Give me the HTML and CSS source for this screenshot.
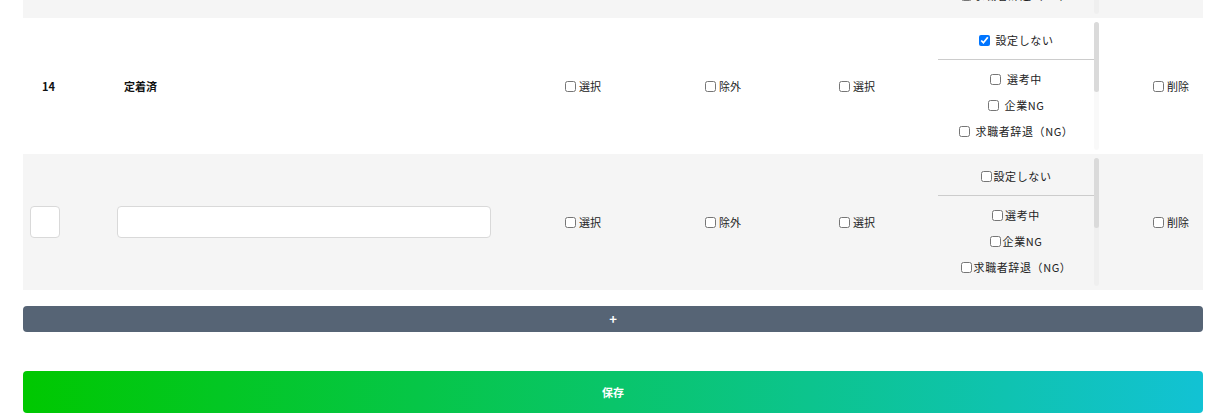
FILE: index.html
```html
<!DOCTYPE html>
<html lang="ja">
<head>
<meta charset="utf-8">
<title>ステータス設定</title>
<link rel="stylesheet" href="styles.css">
</head>
<body>
<div class="page">
  <div class="rows">
    <div class="row grey">
      <div class="cell num"><input class="num-input" type="text"></div>
      <div class="cell name"><input class="name-input" type="text"></div>
      <div class="cell center"><label class="chk"><input type="checkbox">選択</label></div>
      <div class="cell center"><label class="chk"><input type="checkbox">除外</label></div>
      <div class="cell center"><label class="chk"><input type="checkbox">選択</label></div>
      <div class="cell status">
        <div class="status-box tight">
          <div class="status-scroll">
            <div class="status-head"><label class="opt"><input type="checkbox">設定しない</label></div>
            <div class="status-list">
              <label class="opt"><input type="checkbox">選考中</label>
              <label class="opt"><input type="checkbox">企業NG</label>
              <label class="opt"><input type="checkbox">求職者辞退（NG）</label>
            </div>
          </div>
          <div class="scrollbar"><div class="thumb"></div></div>
        </div>
      </div>
      <div class="cell center"><label class="chk"><input type="checkbox">削除</label></div>
    </div>

    <div class="row white">
      <div class="cell num"><span class="num-text">14</span></div>
      <div class="cell name"><span class="name-text">定着済</span></div>
      <div class="cell center"><label class="chk"><input type="checkbox">選択</label></div>
      <div class="cell center"><label class="chk"><input type="checkbox">除外</label></div>
      <div class="cell center"><label class="chk"><input type="checkbox">選択</label></div>
      <div class="cell status">
        <div class="status-box spaced">
          <div class="status-scroll">
            <div class="status-head"><label class="opt"><input type="checkbox" checked>設定しない</label></div>
            <div class="status-list">
              <label class="opt"><input type="checkbox">選考中</label>
              <label class="opt"><input type="checkbox">企業NG</label>
              <label class="opt"><input type="checkbox">求職者辞退（NG）</label>
            </div>
          </div>
          <div class="scrollbar"><div class="thumb"></div></div>
        </div>
      </div>
      <div class="cell center"><label class="chk"><input type="checkbox">削除</label></div>
    </div>

    <div class="row grey">
      <div class="cell num"><input class="num-input" type="text"></div>
      <div class="cell name"><input class="name-input" type="text"></div>
      <div class="cell center"><label class="chk"><input type="checkbox">選択</label></div>
      <div class="cell center"><label class="chk"><input type="checkbox">除外</label></div>
      <div class="cell center"><label class="chk"><input type="checkbox">選択</label></div>
      <div class="cell status">
        <div class="status-box tight">
          <div class="status-scroll">
            <div class="status-head"><label class="opt"><input type="checkbox">設定しない</label></div>
            <div class="status-list">
              <label class="opt"><input type="checkbox">選考中</label>
              <label class="opt"><input type="checkbox">企業NG</label>
              <label class="opt"><input type="checkbox">求職者辞退（NG）</label>
            </div>
          </div>
          <div class="scrollbar"><div class="thumb"></div></div>
        </div>
      </div>
      <div class="cell center"><label class="chk"><input type="checkbox">削除</label></div>
    </div>
  </div>

  <button class="add-btn" type="button">+</button>
  <button class="save-btn" type="button">保存</button>
</div>
</body>
</html>
```

FILE: styles.css
```css
html, body {
  margin: 0;
  padding: 0;
  background: #ffffff;
}

body {
  font-family: "Noto Sans CJK JP", "Noto Sans", sans-serif;
  font-size: 11px;
  color: #222222;
}

.page {
  padding: 0 14px 0 23px;
  display: flex;
  flex-direction: column;
}

.rows {
  margin-top: -118px;
  display: flex;
  flex-direction: column;
}

.row {
  display: grid;
  grid-template-columns: 87px 390px 166px 114px 154px 205px 64px;
  height: 136px;
  align-items: center;
}

.row.grey { background: #f5f5f5; }
.row.white { background: #ffffff; }

.cell {
  display: flex;
  align-items: center;
  height: 100%;
}

.cell.center { justify-content: center; }

.cell.num { padding-left: 7px; }
.cell.name { padding-left: 7px; }

.num-text {
  padding-left: 12px;
  font-weight: bold;
  color: #111;
}

.name-text {
  padding-left: 7px;
  font-weight: bold;
  color: #111;
}

.num-input,
.name-input {
  box-sizing: border-box;
  height: 32px;
  border: 1px solid #d9d9d9;
  border-radius: 4px;
  background: #ffffff;
  margin: 0;
  padding: 0 6px;
  outline: none;
}

.num-input { width: 30px; }
.name-input { width: 374px; }

.chk {
  display: inline-flex;
  align-items: center;
  line-height: 15px;
  white-space: nowrap;
}

.chk input,
.opt input {
  width: 11px;
  height: 11px;
  margin: 0 3px 0 0;
}

.cell.status {
  padding-left: 4px;
}

.status-box {
  display: flex;
  width: 161px;
  height: 128px;
}

.status-scroll {
  width: 156px;
  height: 128px;
  overflow: hidden;
}

.scrollbar {
  width: 5px;
  height: 128px;
  background: rgba(0, 0, 0, 0.025);
  border-radius: 3px;
}

.thumb {
  height: 70px;
  background: #dadada;
  border-radius: 3px;
}

.status-head {
  display: flex;
  justify-content: center;
  padding: 11px 0;
  border-bottom: 1px solid #cccccc;
}

.status-list {
  display: flex;
  flex-direction: column;
  padding: 6px 0 10px;
}

.opt {
  display: flex;
  justify-content: center;
  align-items: center;
  height: 26px;
  line-height: 15px;
  letter-spacing: 0.6px;
  white-space: nowrap;
}

.status-head .opt { height: 15px; }

.spaced .opt input { margin-right: 6px; }
.tight .opt input { margin-right: 2px; }

.add-btn {
  margin-top: 16px;
  height: 26px;
  border: none;
  border-radius: 4px;
  background: #566475;
  color: #ffffff;
  font-family: "Noto Sans CJK JP", "Noto Sans", sans-serif;
  font-size: 13px;
  font-weight: bold;
  padding: 0;
  line-height: 26px;
}

.save-btn {
  margin-top: 39px;
  height: 42px;
  border: none;
  border-radius: 4px;
  background: linear-gradient(to right, #00c800, #12c2d4);
  color: #ffffff;
  font-family: "Noto Sans CJK JP", "Noto Sans", sans-serif;
  font-size: 11px;
  font-weight: bold;
  padding: 0;
}
```
